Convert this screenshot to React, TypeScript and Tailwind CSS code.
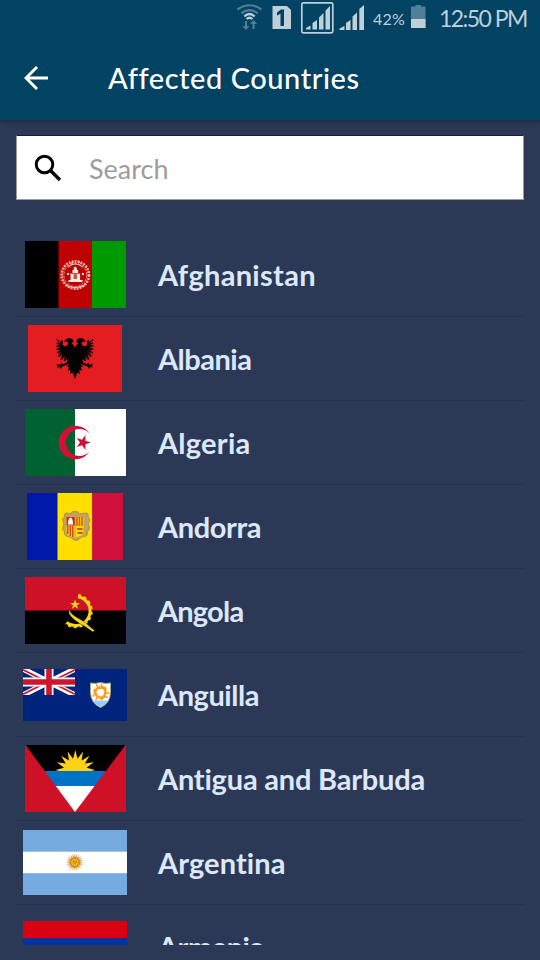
import type { ReactNode } from "react";

/** Points of a star polygon, first tip at `start` degrees. */
function star(cx: number, cy: number, tips: number, outer: number, inner: number, start = -90) {
  return Array.from({ length: tips * 2 }, (_, i) => {
    const r = i % 2 ? inner : outer;
    const a = ((start + (i * 180) / tips) * Math.PI) / 180;
    return `${(cx + r * Math.cos(a)).toFixed(2)},${(cy + r * Math.sin(a)).toFixed(2)}`;
  }).join(" ");
}

function Flag({ w, h, children }: { w: number; h: number; children: ReactNode }) {
  return (
    <svg width={w} height={h} viewBox={`0 0 ${w} ${h}`} className="block shrink-0">
      {children}
    </svg>
  );
}

const Afghanistan = () => (
  <Flag w={101} h={67}>
    <rect width="34" height="67" fill="#000" />
    <rect x="33.5" width="34" height="67" fill="#bf0000" />
    <rect x="67" width="34" height="67" fill="#009900" />
    <g fill="none" stroke="#eebfb4">
      <circle cx="50.3" cy="34" r="13.6" strokeWidth="2.600" strokeDasharray="1.900 1.100" />
      <circle cx="50.3" cy="34" r="11.4" strokeWidth=".7" strokeDasharray="3 1" />
      <path d="M43 26q7-6 15 0M46 22l2 1M53 22l2-1M41 44q9 5 19 0" strokeWidth="1.100" />
    </g>
    <path d="M45.500 39v-7h2v-3h1q0-3 1.800-3.500q1.800.5 1.800 3.500h1v3h2v7zM42 32h2v2h-2zM57 32h2v2h-2zM43.500 39h14v2h-14z" fill="#fbe9e4" />
    <path d="M48.500 38v-4q1.800-2.500 3.600 0v4zM46 32h9v1h-9z" fill="#c9563f" />
  </Flag>
);

const EAGLE =
  "M0 23L1.500 20L3.500 18.500L1.500 16.500L2.500 14L5.500 13L9 14L11 16.500L8 16.500L6.500 18L7.500 20.500L10.500 21.500L12.500 19.500L12 16.500L13.500 14.500L14.500 17L18 14L18.500 15L14.500 18.500L18.500 17.500L18.300 18.700L14.300 20.500L18.700 20.500L18.300 21.800L14.300 22.500L18.700 23.700L18 25L14 24.500L18.500 27.500L17.300 28.700L13.500 26.500L17 31L15.500 32L12.500 28.500L14.500 34.500L13 35L10.500 31L11 36L9.500 36L8 33L8 37L12 39.500L13.500 37.500L14.500 39.800L18.500 39L17 41L18 43L15 41.500L14.500 44L12.500 41.300L8 40L5.500 38.500L8 42L6 42L7 46L4.500 44.500L5 49L2.500 47.500L0 54Z";

const Albania = () => (
  <Flag w={94} h={67}>
    <rect width="94" height="67" fill="#e41e20" />
    <path d={EAGLE} transform="translate(46.800 0)" />
    <path d={EAGLE} transform="translate(47 0) scale(-1 1)" />
  </Flag>
);

const Algeria = () => (
  <Flag w={101} h={67}>
    <rect width="101" height="67" fill="#fff" />
    <rect width="50" height="67" fill="#006233" />
    <path d="M64.800 24.700A16.800 16.800 0 1 0 64.800 42.300A13.500 13.500 0 1 1 64.800 24.700Z" fill="#d21034" />
    <polygon points={star(58, 33.5, 5, 7.8, 3, 0)} fill="#d21034" />
  </Flag>
);

const Andorra = () => (
  <Flag w={96} h={67}>
    <rect width="31" height="67" fill="#0018a8" />
    <rect x="30.500" width="35" height="67" fill="#fedf00" />
    <rect x="65.200" width="31" height="67" fill="#d0103a" />
    <path
      d="M44 21q0-3 4-2.500q4-.5 4 2.500q4-1 8-1q2 1 1 4q3 2 1.500 4.500q-2 2-.5 4q1.500 4-1.500 6q1 4-3 5q-4-.5-5.500 3q-3 1.500-6 0q-2-3.500-6-3q-3-1-2.500-5q-3-2-1.500-5q2-3 0-5q-1.500-3 1.500-4.500q-1-3 1-4q3 0 5.500 1z"
      fill="#c3a45c"
      stroke="#a58848"
      strokeWidth=".8"
    />
    <path d="M39.500 24h17v15q0 4-8.500 5.500q-8.500-1.500-8.500-5.500z" fill="#fedf00" />
    <rect x="39.500" y="24" width="8.500" height="8.500" fill="#d52b1e" />
    <path d="M41 31.500q0-6 2.500-7q2.500 1 2.500 7z" fill="#fff" />
    <path d="M50 24v8.500M52.500 24v8.500M55 24v8.500M40.800 33v8M43.300 33v10M45.800 33v11" stroke="#d5401e" strokeWidth="1.400" />
    <path d="M49.500 35h6v2h-5zM49.500 39h6v2h-4z" fill="#d5501e" />
    <path d="M39.500 32.700h17M48 24v20" stroke="#c07820" strokeWidth=".6" />
  </Flag>
);

const Angola = () => (
  <Flag w={101} h={67}>
    <rect width="101" height="67" fill="#000" />
    <rect width="101" height="33.500" fill="#ce1126" />
    <g fill="none" stroke="#f9d616">
      <path d="M53 19.700A14.500 14.500 0 1 1 41.500 45.300" strokeWidth="3" />
      <path d="M53.300 18A16.200 16.200 0 1 1 40.500 46.700" strokeWidth="2" strokeDasharray="3 2.800" />
    </g>
    <path d="M44 32q1.500 5 8 8.500q8 4 11 7.500l6.500 5.500l-1.500 1.500l-8-5.500q-11-6-14-10q-3-3-2-7.500z" fill="#f9d616" stroke="#000" strokeWidth=".4" />
    <polygon points={star(50, 27.6, 5, 5.2, 2.1)} fill="#f9d616" />
  </Flag>
);

const Anguilla = () => (
  <Flag w={104} h={52}>
    <rect width="104" height="52" fill="#00247d" />
    <svg width="52" height="26" viewBox="0 0 52 26">
      <path d="M0 0L52 26M52 0L0 26" stroke="#fff" strokeWidth="5.500" />
      <path d="M0 .8L26 13.800M52 25.200L26 12.200M52 .8L26 13.800M0 25.200L26 12.200" stroke="#cf142b" strokeWidth="1.700" />
      <path d="M26 0V26M0 13H52" stroke="#fff" strokeWidth="9" />
      <path d="M26 0V26M0 13H52" stroke="#cf142b" strokeWidth="5.600" />
    </svg>
    <path d="M67.500 14q5 1 10-.5q5 1.500 10 .5v9q0 11-10 15.500q-10-4.500-10-15.500z" fill="#fff" stroke="#a8b060" strokeWidth=".9" />
    <path d="M69 31.500h17q-3 4-8.500 6.500q-5.500-2.500-8.500-6.500z" fill="#99ccff" />
    <g fill="none" stroke="#ff9a1a" strokeLinecap="round">
      {[0, 120, 240].map((a) => (
        <g key={a} transform={`rotate(${a} 77.500 23.500)`}>
          <path d="M72 24q.5-4.500 4.500-5.200t6 .7" strokeWidth="2.400" />
          <path d="M75 18l-1.500-2M71.500 25.500l-1.500 1.500" strokeWidth="1.500" />
        </g>
      ))}
    </g>
  </Flag>
);

const Antigua = () => (
  <Flag w={101} h={67}>
    <rect width="101" height="67" fill="#ce1126" />
    <clipPath id="vee">
      <path d="M.5 0H100.500L50 67Z" />
    </clipPath>
    <g clipPath="url(#vee)">
      <rect width="101" height="27" fill="#000" />
      <polygon points={star(50.3, 25, 16, 20, 11.5)} fill="#fcd116" />
      <rect y="26" width="101" height="15" fill="#0072c6" />
      <rect y="41" width="101" height="26" fill="#fff" />
    </g>
  </Flag>
);

const Argentina = () => (
  <Flag w={104} h={65}>
    <rect width="104" height="65" fill="#74acdf" />
    <rect y="21.700" width="104" height="21.500" fill="#fff" />
    <polygon points={star(51.8, 32.3, 24, 9.3, 5)} fill="#cf9a4c" />
    <circle cx="51.800" cy="32.300" r="4.300" fill="#f6b40e" stroke="#c07a1a" strokeWidth=".8" />
    <path d="M49.800 31.200h4l-2 3z" fill="none" stroke="#b8720e" strokeWidth=".7" />
  </Flag>
);

const Armenia = () => (
  <Flag w={104} h={52}>
    <rect width="104" height="17.300" fill="#d90012" />
    <rect y="17.300" width="104" height="17.400" fill="#0033a0" />
    <rect y="34.700" width="104" height="17.300" fill="#f2a800" />
  </Flag>
);

const countries = [
  { name: "Afghanistan", flag: <Afghanistan />, tracking: "tracking-[0.3px]" },
  { name: "Albania", flag: <Albania />, tracking: "tracking-[-0.5px]" },
  { name: "Algeria", flag: <Algeria />, tracking: "tracking-[0.25px]" },
  { name: "Andorra", flag: <Andorra />, tracking: "tracking-[-0.4px]" },
  { name: "Angola", flag: <Angola />, tracking: "tracking-[-0.8px]" },
  { name: "Anguilla", flag: <Anguilla />, tracking: "tracking-[-0.45px]" },
  { name: "Antigua and Barbuda", flag: <Antigua />, tracking: "tracking-[-0.2px]" },
  { name: "Argentina", flag: <Argentina />, tracking: "tracking-[0.1px]" },
  { name: "Armenia", flag: <Armenia />, tracking: "tracking-[-0.5px]" },
];

function StatusBar() {
  return (
    <div className="flex h-9 items-start pl-[236px] text-[#bfd0d9]">
      <svg width="128" height="36" viewBox="236 0 128 36" className="shrink-0">
        <g fill="none" strokeWidth="2.200">
          <path d="M237.500 9.500Q249.500 1 261.500 9.500M241.300 13.300Q249.500 7 257.700 13.300" stroke="#4f8098" />
          <path d="M244.300 16.500Q249.500 11.500 254.700 16.500M246.500 19Q249.500 16.500 252.500 19" stroke="#bfd0d9" />
        </g>
        <path d="M245 21h2v5h2.500l-3.500 4l-3.500-4H245zM252.500 29h2v-5h2.500l-3.500-4l-3.500 4h2.500z" fill="#4f8098" />
        <path d="M272.500 6H287l4 4V29H272.500z" fill="#bfd0d9" />
        <path d="M277 12.500L281 9.500H284V26H280.500V13.800L277 15.500z" fill="#024262" />
        <rect x="301.800" y="2.800" width="31" height="30" rx="1.500" fill="none" stroke="#bfd0d9" strokeWidth="1.700" />
        <path d="M306 29.500V28L310.500 25.500V29.500zM312.500 29.500V23L317 20V29.500zM319 29.500V17.500L323.500 13V29.500zM325.500 29.500V10.500L330 6V29.500z" fill="#bfd0d9" />
        <path d="M339.500 30V28.500L344.500 26V30zM346 30V23L350.500 20V30zM352.500 30V16.500L357 12.500V30zM359.300 30V9L364 5V30z" fill="#bfd0d9" />
      </svg>
      <span className="ml-[9px] w-8 whitespace-nowrap pt-[9px] text-[16px] leading-5 tracking-[0.2px]">42%</span>
      <svg width="15" height="24" viewBox="0 0 15 24" className="ml-[6px] mt-[5px] shrink-0">
        <path d="M0 1.500H4.500V0H10V1.500H14.500V23H0z" fill="#4f8098" />
        <path d="M0 14H14.500V23H0z" fill="#bfd0d9" />
      </svg>
      <span className="ml-[13px] whitespace-nowrap pt-1 text-[23px] leading-7 tracking-[-1.55px]">12:50 PM</span>
    </div>
  );
}

export default function App() {
  return (
    <div className="flex h-[960px] w-[540px] flex-col overflow-hidden bg-[#2b3956] font-['Lato',sans-serif] [font-variant-ligatures:none]">
      <header className="relative h-[120px] shrink-0 bg-[#024262] shadow-[0_2px_4px_rgba(0,0,0,0.25)]">
        <StatusBar />
        <div className="flex h-[84px] items-center pl-6">
          <svg width="24" height="24" viewBox="0 0 24 24" className="shrink-0" fill="none" stroke="#fff" strokeWidth="2.900">
            <path d="M24 12H2M13 1L2 12L13 23" />
          </svg>
          <h1 className="ml-[60px] whitespace-nowrap text-[29px] font-medium leading-9 tracking-[0.55px] text-white">Affected Countries</h1>
        </div>
      </header>

      <div className="mx-4 mt-[15px] flex h-[65px] shrink-0 items-center border border-[#999c9b] border-t-[#16203c] bg-white pl-[17px] pt-px">
        <svg width="28" height="28" viewBox="0 0 28 28" className="shrink-0" fill="none" stroke="#000">
          <circle cx="10.500" cy="10.500" r="8.300" strokeWidth="2.900" />
          <path d="M16.500 16.500L26 26" strokeWidth="3.400" />
        </svg>
        <span className="ml-[27px] whitespace-nowrap pt-[3px] text-[27px] text-[#9d9d9d]">Search</span>
      </div>

      <ul className="mx-[15px] mt-[33px] h-[712px] shrink-0 overflow-hidden">
        {countries.map(({ name, flag, tracking }) => (
          <li key={name} className="flex h-[84px] items-center border-b border-[#25324c] pl-2">
            <div className="flex w-[104px] shrink-0 justify-center">{flag}</div>
            <span className={`ml-[31px] whitespace-nowrap text-[29px] font-bold leading-9 text-[#dde8ff] ${tracking}`}>{name}</span>
          </li>
        ))}
      </ul>
    </div>
  );
}
